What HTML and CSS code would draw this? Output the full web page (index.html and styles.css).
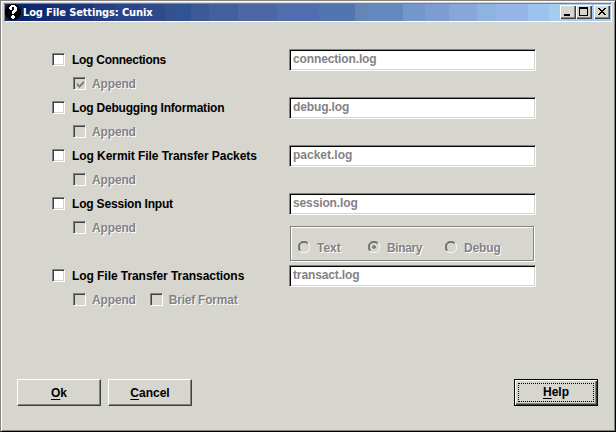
FILE: index.html
```
<!DOCTYPE html>
<html lang="en">
<head>
<meta charset="utf-8">
<title>Log File Settings: Cunix</title>
<link rel="stylesheet" href="styles.css">
</head>
<body>
<div class="window">
  <header class="titlebar">
    <svg class="app-icon" width="16" height="16" viewBox="0 0 16 16" shape-rendering="crispEdges"><path fill="#000" d="M5 0h6v1h2v1h1v1h1v2h1v6h-1v2h-1v1h-1v1h-2v1H5v-1H3v-1H2v-1H1v-2H0V5h1V3h1V2h1V1h2z"/><path fill="#fff" d="M6 1h4v1h1v1h1v4h-1v1h-1v1H9v1H7V7h1V6h1V3H7v3H5V5H4V3h1V2h1zM7 11h2v1h1v2H9v1H7v-1H6v-2h1z"/></svg>
    <h1 class="title">Log File Settings: Cunix</h1>
    <div class="controls">
      <span class="control"><svg width="16" height="14" shape-rendering="crispEdges"><path d="M4 9h6v2H4z"/></svg></span>
      <span class="control"><svg width="16" height="14" shape-rendering="crispEdges"><path fill-rule="evenodd" d="M3 2h9v9H3zM4 4v6h7V4z"/></svg></span>
      <span class="control close"><svg width="16" height="14" shape-rendering="crispEdges"><path d="M4 3h2v1h1v1h2V4h1V3h2v1h-1v1h-1v1H9v1h1v1h1v1h1v1h-2V9H9V8H7v1H6v1H4V9h1V8h1V7h1V6H6V5H5V4H4z"/></svg></span>
    </div>
  </header>
  <main class="settings">
    <section class="entry">
      <div class="options">
        <label class="option w-conn"><i class="box"></i><span>Log Connections</span></label>
        <div class="sub"><label class="option disabled"><i class="box"><svg width="9" height="9" viewBox="0 0 9 9" shape-rendering="crispEdges"><path d="M1 3h1v1h1v1h1V4h1V3h1V2h1V1h1v3H7v1H6v1H5v1H4v1H3V7H2V6H1z"/></svg></i><span>Append</span></label></div>
      </div>
      <div class="field"><span>connection.log</span></div>
    </section>
    <section class="entry">
      <div class="options">
        <label class="option w-debug"><i class="box"></i><span>Log Debugging Information</span></label>
        <div class="sub"><label class="option disabled"><i class="box"></i><span>Append</span></label></div>
      </div>
      <div class="field"><span>debug.log</span></div>
    </section>
    <section class="entry">
      <div class="options">
        <label class="option w-kermit"><i class="box"></i><span>Log Kermit File Transfer Packets</span></label>
        <div class="sub"><label class="option disabled"><i class="box"></i><span>Append</span></label></div>
      </div>
      <div class="field packet"><span>packet.log</span></div>
    </section>
    <section class="entry session">
      <div class="options">
        <label class="option w-session"><i class="box"></i><span>Log Session Input</span></label>
        <div class="sub"><label class="option disabled"><i class="box"></i><span>Append</span></label></div>
      </div>
      <div class="side">
        <div class="field"><span>session.log</span></div>
        <div class="group">
          <label class="radio text"><svg width="12" height="12" viewBox="0 0 12 12"><path class="shade" d="M1.8 10.2A5.5 5.5 0 0 1 10.2 1.8"/><path class="dark" d="M2.5 9.5A4.5 4.5 0 0 1 9.5 2.5"/><path class="light" d="M10.2 1.8A5.5 5.5 0 0 1 1.8 10.2"/></svg><span>Text</span></label>
          <label class="radio binary"><svg width="12" height="12" viewBox="0 0 12 12"><path class="shade" d="M1.8 10.2A5.5 5.5 0 0 1 10.2 1.8"/><path class="dark" d="M2.5 9.5A4.5 4.5 0 0 1 9.5 2.5"/><path class="light" d="M10.2 1.8A5.5 5.5 0 0 1 1.8 10.2"/><path class="dot" d="M5 4h2v1h1v2H7v1H5V7H4V5h1z"/></svg><span>Binary</span></label>
          <label class="radio debug"><svg width="12" height="12" viewBox="0 0 12 12"><path class="shade" d="M1.8 10.2A5.5 5.5 0 0 1 10.2 1.8"/><path class="dark" d="M2.5 9.5A4.5 4.5 0 0 1 9.5 2.5"/><path class="light" d="M10.2 1.8A5.5 5.5 0 0 1 1.8 10.2"/></svg><span>Debug</span></label>
        </div>
      </div>
    </section>
    <section class="entry">
      <div class="options">
        <label class="option w-trans"><i class="box"></i><span>Log File Transfer Transactions</span></label>
        <div class="sub"><label class="option disabled"><i class="box"></i><span>Append</span></label><label class="option disabled brief"><i class="box"></i><span>Brief Format</span></label></div>
      </div>
      <div class="field"><span>transact.log</span></div>
    </section>
  </main>
  <footer class="actions">
    <button class="button"><span><u>O</u>k</span></button>
    <button class="button"><span><u>C</u>ancel</span></button>
    <button class="button default"><span class="focus"><u>H</u>elp</span></button>
  </footer>
</div>
</body>
</html>
```
FILE: styles.css
```
* { box-sizing: border-box; }
body { margin: 0; background: #d6d5ce; }
.window {
  width: 616px; height: 432px; display: flex; flex-direction: column;
  padding: 2px;
  background: #d6d5ce;
  border: 1px solid; border-color: #848284 #000 #000 #848284;
  box-shadow: inset 1px 1px #fff, inset -1px -1px #848284;
  font: bold 12px/14px "Liberation Sans", Arial, sans-serif;
  color: #000;
}
.titlebar {
  flex: none; display: flex; height: 19px; margin: 0 1px;
  border: 1px solid; border-color: #848284 #fff #fff #848284;
  background: linear-gradient(90deg,
    #0a246a 0 24px, #10296f 0 46px, #172f75 0 66px, #1d357b 0 88px, #243f84 0 110px,
    #29468a 0 134px, #2f4a8c 0 160px, #33528d 0 170px, #315394 0 186px, #3b5996 0 204px,
    #42609c 0 233px, #4b68a5 0 272px, #506ead 0 314px, #5274b0 0 350px, #6585b5 0 364px,
    #6688c1 0 398px, #7396cb 0 420px, #7c9cd3 0 444px, #88a7d9 0 472px, #8eb3de 0 491px,
    #95b5e7 0 523px, #9cc3ef 0 544px, #a6caf0 0);
}
.app-icon { flex: none; }
.title { margin: 0 auto 0 2px; padding-top: 1px; font: bold 11px/16px "DejaVu Sans Condensed", "Noto Sans", sans-serif; letter-spacing: -.13px; color: #fff; white-space: nowrap; }
.controls { display: flex; padding: 1px 1px 0 0; }
.control { width: 16px; height: 14px; background: #d6d5ce; box-shadow: inset 1px 1px #fff, inset -1px -1px #404040, inset -2px -2px #848284; }
.control svg, .app-icon { display: block; }
.close { margin-left: 2px; }
.settings { flex: none; height: 338px; padding: 27px 0 0 49px; }
.entry { display: flex; height: 48px; }
.session { height: 72px; }
.options { width: 237px; padding-top: 4px; }
.option { display: flex; gap: 7px; height: 13px; white-space: nowrap; }
.option span { line-height: 14px; }
.w-conn { letter-spacing: -.27px; }
.w-debug { letter-spacing: -.2px; }
.w-kermit, .w-trans { letter-spacing: -.06px; }
.w-session { letter-spacing: -.18px; }
.sub { display: flex; gap: 15px; margin: 11px 0 0 21px; letter-spacing: -.15px; }
.sub .option { gap: 6px; }
.sub .brief { margin-left: -1px; letter-spacing: -.22px; }
.box {
  width: 13px; height: 13px; padding: 2px; background: #fff;
  border: 1px solid; border-color: #848284 #fff #fff #848284;
  box-shadow: inset 1px 1px #404040, inset -1px -1px #d6d5ce;
}
.box svg { display: block; margin: 0; fill: #848284; }
.disabled .box { background: #d6d5ce; }
.disabled, .radio { color: #848284; text-shadow: 1px 1px #fff; }
.field {
  width: 247px; height: 22px; padding: 2px 3px; background: #fff; color: #848284;
  border: 1px solid; border-color: #848284 #fff #fff #848284;
  box-shadow: inset 1px 1px #000, inset -1px -1px #d6d5ce;
  letter-spacing: -.13px;
}
.packet { letter-spacing: 0; }
.group {
  display: flex; width: 244px; height: 35px; margin: 11px 0 0 1px; padding: 14px 0 0 7px;
  border: 1px solid #848284; box-shadow: inset 1px 1px #fff, 1px 1px #fff;
}
.radio { display: flex; gap: 7px; height: 12px; }
.radio svg { flex: none; fill: none; }
.radio.text { width: 70px; }
.radio.binary { width: 77px; letter-spacing: -.4px; }
.radio.debug { letter-spacing: -.15px; }
.radio .shade { stroke: #848284; }
.radio .dark { stroke: #404040; }
.radio .light { stroke: #fff; }
.radio .dot { fill: #848284; }
.actions { display: flex; gap: 7px; padding: 19px 15px 0 14px; }
.button {
  flex: none; width: 84px; height: 27px; padding: 0; background: #d6d5ce; color: #000; font: inherit;
  border: 1px solid; border-color: #fff #404040 #404040 #fff;
  box-shadow: inset -1px -1px #848284;
}
.button u { text-underline-offset: 2px; text-decoration-thickness: 1px; }
.default { margin-left: auto; border-color: #000; box-shadow: inset 1px 1px #fff, inset -1px -1px #404040, inset -2px -2px #848284; }
.focus { display: block; width: 76px; height: 19px; margin: 0 auto; border: 1px dotted #000; line-height: 17px; }
```
